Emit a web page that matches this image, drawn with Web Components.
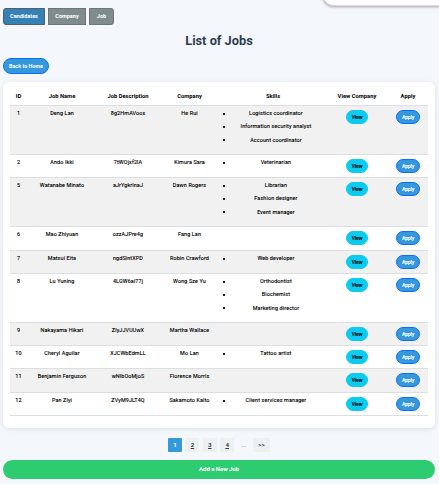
<!DOCTYPE html>
<html lang="en"><head><meta charset="utf-8"><title>List of Jobs</title>
<style>
html,body{margin:0;height:484px;overflow:hidden;background:#f4f7fc}
body{font-family:Roboto,"Liberation Sans",sans-serif;color:#000}
</style></head><body><jobs-page></jobs-page>
<script>
class PillButton extends HTMLElement{
 constructor(){super();this.attachShadow({mode:'open'}).innerHTML=`<style>
:host{display:flex;box-sizing:border-box;align-items:center;justify-content:center;width:24px;height:14px;border:1px solid #0d6efd;border-radius:8px;background:#3498db;color:#fff;font:700 5.2px Roboto,sans-serif;letter-spacing:-.2px;white-space:nowrap}
:host([kind=view]){width:22px;background:#0dcaf0;border-color:#0dcaf0;color:#000}
:host([kind=home]){width:46px;height:16px;font-size:5.4px;letter-spacing:0;padding-bottom:1px}
:host([kind=add]){width:432px;height:19px;background:#2ecc71;border:0;border-radius:10px;font-size:6.1px;letter-spacing:-.1px;padding-bottom:2px}
</style><slot></slot>`}}
customElements.define('pill-button',PillButton);

class NavTabs extends HTMLElement{
 constructor(){super();this.attachShadow({mode:'open'}).innerHTML=`<style>
:host{display:flex;gap:3px}
span{box-sizing:border-box;height:17px;border:1px solid #6c757d;background:#7f8c8d;color:#fff;font-weight:700;font-size:5.5px;display:flex;align-items:center;justify-content:center;padding-bottom:1px}
.a{width:42px;background:#3580b5;border-color:#565e64;border-radius:3px 0 0 3px}.b{width:38px}.c{width:25px;border-radius:0 3px 3px 0}
</style><span class="a">Candidates</span><span class="b">Company</span><span class="c">Job</span>`}}
customElements.define('nav-tabs',NavTabs);

class JobRow extends HTMLElement{
 connectedCallback(){
  const [id,name,desc,company,skills]=JSON.parse(this.getAttribute('data'));
  this.attachShadow({mode:'open'}).innerHTML=`<style>
:host{display:grid;grid-template-columns:17px 70px 62px 61px 106px 62px 40px;box-sizing:border-box;border-bottom:1px solid #dcdfe2;text-align:center;font-size:5.4px;font-weight:400;line-height:7px;letter-spacing:.14px;white-space:nowrap;-webkit-text-stroke:.12px #000}
:host([odd]){background:#f1f1f1}
div{padding-top:4px}
ul{margin:0;padding:4px 0 0;list-style:none}
li{display:flex;align-items:center;height:7px;margin-bottom:6.4px}
li::before{content:"";width:2px;height:2px;margin-left:3px;background:#222}
li span{width:106px;margin-left:1px}
pill-button{margin:0 auto;-webkit-text-stroke:0}
</style><div>${id}</div><div>${name}</div><div>${desc}</div><div>${company}</div><ul>${skills.map(s=>`<li><span>${s}</span></li>`).join('')}</ul><div><pill-button kind="view">View</pill-button></div><div><pill-button>Apply</pill-button></div>`}}
customElements.define('job-row',JobRow);

class JobTable extends HTMLElement{
 constructor(){super();
 const rows=[[49,1,'Deng Lan','8g2HmAVoox','He Rui',['Logistics coordinator','Information security analyst','Account coordinator']],
 [23,2,'Ando Ikki','7tWOjxf2lA','Kimura Sara',['Veterinarian']],
 [49,5,'Watanabe Minato','aJrYgkrlnaJ','Dawn Rogers',['Librarian','Fashion designer','Event manager']],
 [24,6,'Mao Zhiyuan','ozzAJPre4g','Fang Lan',[]],
 [23,7,'Matsui Eita','ngdSintXPD','Robin Crawford',['Web developer']],
 [49,8,'Lu Yuning','4LGW6ai77j','Wong Sze Yu',['Orthodontist','Biochemist','Marketing director']],
 [23,9,'Nakayama Hikari','ZlyJJVUUwX','Martha Wallace',[]],
 [23,10,'Cheryl Aguilar','XJCWbEdmLL','Mo Lan',['Tattoo artist']],
 [24,11,'Benjamin Ferguson','wNlbOoMjoS','Florence Morris',[]],
 [23,12,'Pan Ziyi','ZVyM9JLT4Q','Sakamoto Kaito',['Client services manager']]];
 this.attachShadow({mode:'open'}).innerHTML=`<style>
:host{display:block;box-sizing:border-box;width:432px;height:346px;padding:7px;background:#fff;border-radius:6px;box-shadow:0 1px 5px rgba(0,0,0,.1)}
header{box-sizing:border-box;display:grid;grid-template-columns:17px 70px 62px 61px 106px 62px 40px;height:17px;border-bottom:1px solid #dcdfe2;text-align:center;font-weight:700;font-size:5.8px;line-height:14px;white-space:nowrap}
</style><header><span>ID</span><span>Job Name</span><span>Job Description</span><span>Company</span><span>Skills</span><span>View Company</span><span>Apply</span></header>${rows.map(([h,...d],i)=>`<job-row style="height:${h}px" ${i%2?'':'odd'} data='${JSON.stringify(d)}'></job-row>`).join('')}`}}
customElements.define('job-table',JobTable);

class PageLinks extends HTMLElement{
 constructor(){super();this.attachShadow({mode:'open'}).innerHTML=`<style>
:host{display:flex;justify-content:center;gap:3.4px;height:14px;font-weight:700;font-size:6.2px;color:#2c3e50}
span{width:14px;box-sizing:border-box;padding-bottom:1px;display:flex;align-items:center;justify-content:center;background:#ecf0f1;border-radius:1px;text-decoration:underline}
.on{background:#3498db;color:#fff;text-decoration:none}.dots{background:none;text-decoration:none;width:12px;font-weight:400}.next{width:17px;text-decoration:none}
</style><span class="on">1</span><span>2</span><span>3</span><span>4</span><span class="dots">...</span><span class="next">&gt;&gt;</span>`}}
customElements.define('page-links',PageLinks);

class JobsPage extends HTMLElement{
 constructor(){super();this.attachShadow({mode:'open'}).innerHTML=`<style>
:host{display:block;position:relative;box-sizing:border-box;height:484px;padding:8px 4px 0 3px;overflow:hidden}
.toast{position:absolute;left:322px;top:-19px;width:140px;height:25px;box-sizing:border-box;background:#fffcff;border:1px solid #dcdade;border-radius:12px;box-shadow:0 1px 3px rgba(0,0,0,.35)}
h1{margin:7px 0 0;height:18px;text-align:center;font-size:12.8px;line-height:18px;font-weight:700;color:#2c3e50}
.home{margin-top:8px}job-table{margin-top:8px}page-links{margin:10px 0 8px}
</style><div class="toast"></div><nav-tabs></nav-tabs><h1>List of Jobs</h1><pill-button class="home" kind="home">Back to Home</pill-button><job-table></job-table><page-links></page-links><pill-button kind="add">Add a New Job</pill-button>`}}
customElements.define('jobs-page',JobsPage);
</script></body></html>
